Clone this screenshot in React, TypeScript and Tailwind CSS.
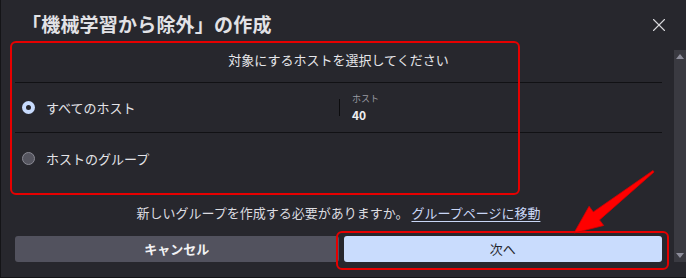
import { X } from "lucide-react";

const font = { fontFamily: '"Noto Sans CJK JP", "Noto Sans", sans-serif' };

function Radio({ checked }: { checked: boolean }) {
  if (checked) {
    return (
      <span className="flex items-center justify-center w-[13px] h-[13px] rounded-full bg-[#c8dbfd]">
        <span className="w-[5px] h-[5px] rounded-full bg-[#27272d]" />
      </span>
    );
  }
  return <span className="block w-[13px] h-[13px] rounded-full bg-[#55555f] border border-[#8a8a94]" />;
}

export default function App() {
  return (
    <div
      className="relative w-[686px] h-[278px] overflow-hidden bg-[#27272d] border-l border-b border-[#141417] text-[#e4e4e8] flex flex-col"
      style={font}
    >
      {/* header */}
      <div className="flex items-center justify-between h-[48px] pl-[21px] pr-[16px]">
        <h1 className="text-[19px] font-bold tracking-[0.2px] text-[#e2e2e6]">「機械学習から除外」の作成</h1>
        <X className="w-[22px] h-[22px] text-[#d8d8dc] mt-[2px]" strokeWidth={1.2} />
      </div>

      <div className="flex flex-1">
        <div className="w-[661px] pl-[14px] flex flex-col">
          <div className="h-[35px] flex items-start pt-[2px] justify-center text-[13px] text-[#e6e6ea] border-b border-[#111114]">
            対象にするホストを選択してください
          </div>

          <div className="h-[50px] flex items-center border-b border-[#111114]">
            <div className="w-[324px] flex items-center gap-[11px] pl-[7px]">
              <Radio checked />
              <span className="text-[13px]">すべてのホスト</span>
            </div>
            <div className="w-px h-[17px] bg-[#0c0c0e]" />
            <div className="pl-[12px] flex flex-col leading-none">
              <span className="text-[9px] text-[#9a9aa2]">ホスト</span>
              <span className="text-[12px] font-bold mt-[6px] text-[#eeeef0]">40</span>
            </div>
          </div>

          <div className="h-[51px] flex items-center gap-[11px] pl-[7px]">
            <Radio checked={false} />
            <span className="text-[13px]">ホストのグループ</span>
          </div>

          <div className="mt-[19px] text-[13px] text-center text-[#dcdce0]">
            新しいグループを作成する必要がありますか。{" "}
            <span className="underline underline-offset-[3px] text-[#c9d6f5]">グループページに移動</span>
          </div>

          <div className="mt-[13px] flex gap-[5px]">
            <button className="w-[324px] h-[26px] rounded-[3px] bg-[#52525e] text-[13px] font-bold text-[#f2f2f4]">
              キャンセル
            </button>
            <button className="w-[319px] h-[26px] rounded-[3px] bg-[#c9dcfd] text-[13px] text-[#26262c]">
              次へ
            </button>
          </div>
        </div>

        {/* scrollbar */}
        <div className="ml-auto mt-[2px] w-[12px] h-[212px] bg-[#3a3a41] flex flex-col items-center justify-between py-[4px]">
          <span className="w-0 h-0 border-l-[4px] border-r-[4px] border-b-[5px] border-l-transparent border-r-transparent border-b-[#8d8d9a]" />
          <span className="w-0 h-0 border-l-[4px] border-r-[4px] border-t-[5px] border-l-transparent border-r-transparent border-t-[#8d8d9a]" />
        </div>
      </div>

      {/* annotations */}
      <div className="absolute left-[9px] top-[41px] w-[510px] h-[154px] border-2 border-[#e60000] rounded-[6px] pointer-events-none" />
      <div className="absolute left-[335px] top-[231px] w-[333px] h-[39px] border-2 border-[#e60000] rounded-[6px] pointer-events-none" />
      <svg className="absolute left-[560px] top-[165px] pointer-events-none" width="100" height="75" viewBox="0 0 100 75">
        <polygon
          points="93,7 38.5,54.9 42.7,60.5 13,68 28.1,41.3 32.3,46.9 92,5.5"
          fill="#ff0000"
          stroke="#d40000"
          strokeWidth="0.8"
          strokeLinejoin="round"
        />
      </svg>
    </div>
  );
}
